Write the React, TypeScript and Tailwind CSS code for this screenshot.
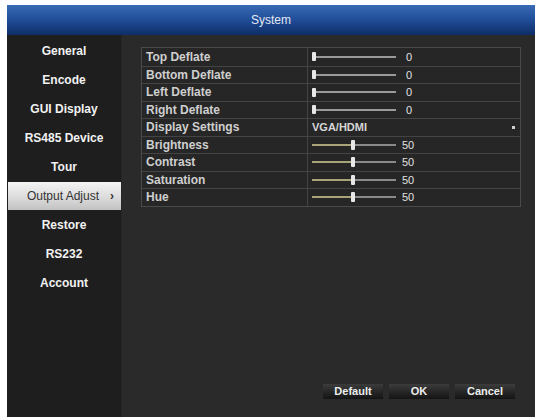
import React from "react"

const menu = ["General", "Encode", "GUI Display", "RS485 Device", "Tour", "Output Adjust", "Restore", "RS232", "Account"]

type Row =
  | { label: string; kind: "deflate"; value: number }
  | { label: string; kind: "level"; value: number }
  | { label: string; kind: "select"; value: string }

const rows: Row[] = [
  { label: "Top Deflate", kind: "deflate", value: 0 },
  { label: "Bottom Deflate", kind: "deflate", value: 0 },
  { label: "Left Deflate", kind: "deflate", value: 0 },
  { label: "Right Deflate", kind: "deflate", value: 0 },
  { label: "Display Settings", kind: "select", value: "VGA/HDMI" },
  { label: "Brightness", kind: "level", value: 50 },
  { label: "Contrast", kind: "level", value: 50 },
  { label: "Saturation", kind: "level", value: 50 },
  { label: "Hue", kind: "level", value: 50 },
]

function DeflateSlider({ value }: { value: number }) {
  return (
    <div className="flex items-center h-full">
      <div className="w-[84px] flex items-center">
        <div className="w-[4px] h-[9px] bg-[#e8e8e8] rounded-[1px]" />
        <div className="flex-1 h-[2px] bg-[#9a9a9a]" />
      </div>
      <span className="ml-[10px] text-[#e0e0e0]">{value}</span>
    </div>
  )
}

function LevelSlider({ value }: { value: number }) {
  return (
    <div className="flex items-center h-full">
      <div className="w-[84px] flex items-center">
        <div className="w-[39px] h-[2px] bg-[#a9a37a]" />
        <div className="w-[4px] h-[10px] bg-[#e8e8e8] rounded-[1px]" />
        <div className="flex-1 h-[2px] bg-[#8a8a8a]" />
      </div>
      <span className="ml-[6px] text-[#e0e0e0]">{value}</span>
    </div>
  )
}

export default function App() {
  return (
    <div
      className="w-[539px] h-[417px] bg-white pl-[7px] pt-[5px] pr-[4px] overflow-hidden"
      style={{ fontFamily: '"Liberation Sans", Arial, sans-serif' }}
    >
      <div className="h-full flex flex-col bg-[#2a2a2a]">
        {/* Title bar */}
        <div className="h-[30px] flex items-center justify-center bg-gradient-to-b from-[#3a6ab5] via-[#1f4d98] to-[#0f2d66] text-[12px] text-[#e4e8f2]">
          System
        </div>

        <div className="flex-1 flex">
          {/* Sidebar */}
          <div className="w-[115px] bg-[#1e1e1e] flex flex-col items-stretch pt-[1px] border-r border-[#262626]">
            {menu.map((item) => {
              const active = item === "Output Adjust"
              return (
                <div key={item} className="h-[29px] flex items-center justify-center">
                  {active ? (
                    <div className="w-[113px] h-[28px] ml-[1px] pl-[19px] flex items-center gap-[11px] bg-gradient-to-b from-[#f4f4f4] via-[#dedede] to-[#c2c2c2] text-[12px] text-[#333]">
                      <span>{item}</span>
                      <span className="font-bold text-[12px]">&rsaquo;</span>
                    </div>
                  ) : (
                    <span className="text-[12px] font-bold text-[#f2f2f2]">{item}</span>
                  )}
                </div>
              )
            })}
          </div>

          {/* Content */}
          <div className="flex-1 flex flex-col pl-[19px] pr-[14px] pt-[12px]">
            <div className="border border-[#4a4a4a] bg-[#262626]">
              {rows.map((row, i) => (
                <div
                  key={row.label}
                  className={`flex h-[17.5px] text-[11px] ${i > 0 ? "border-t border-[#444]" : ""}`}
                >
                  <div className="w-[166px] pl-[4px] flex items-center border-r border-[#444] text-[12px] font-bold text-[#cfcfcf]">
                    {row.label}
                  </div>
                  <div className="flex-1 pl-[4px] pr-[4px]">
                    {row.kind === "deflate" && <DeflateSlider value={row.value} />}
                    {row.kind === "level" && <LevelSlider value={row.value} />}
                    {row.kind === "select" && (
                      <div className="flex items-center justify-between h-full">
                        <span className="font-bold text-[#d6d6d6]">{row.value}</span>
                        <span className="w-[3px] h-[3px] bg-[#d0d0d0] mr-[1px]" />
                      </div>
                    )}
                  </div>
                </div>
              ))}
            </div>

            <div className="flex-1" />

            {/* Buttons */}
            <div className="flex justify-end gap-[6px] pr-[6px] mb-[18px]">
              {["Default", "OK", "Cancel"].map((b) => (
                <div
                  key={b}
                  className="w-[60px] h-[15px] flex items-center justify-center bg-gradient-to-b from-[#3c3c3c] to-[#141414] text-[11px] font-bold text-[#eeeeee]"
                >
                  {b}
                </div>
              ))}
            </div>
          </div>
        </div>
      </div>
    </div>
  )
}
